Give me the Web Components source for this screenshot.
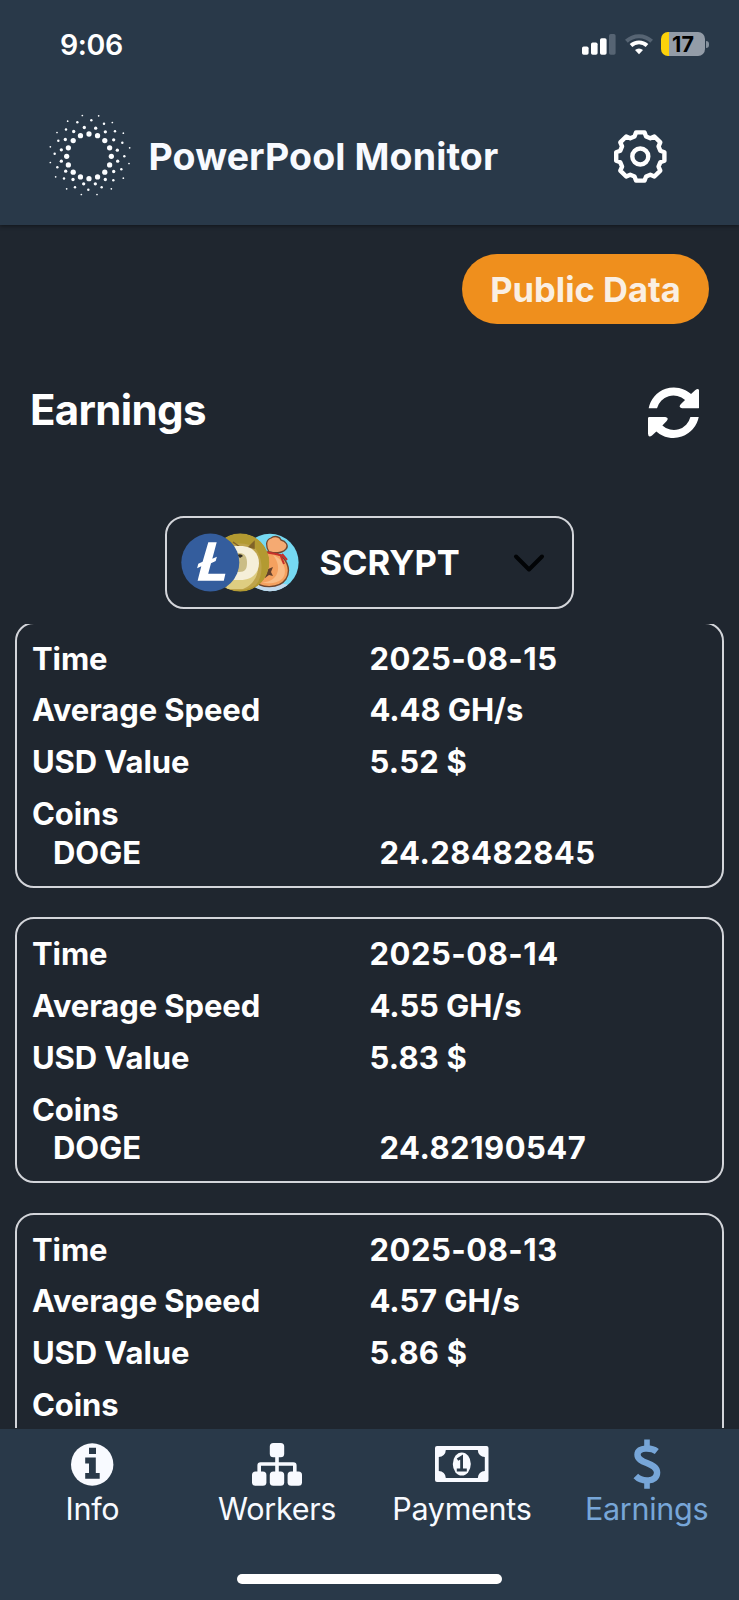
<!DOCTYPE html>
<html lang="en">
<head>
  <meta charset="utf-8">
  <meta name="viewport" content="width=device-width, initial-scale=1">
  <title>PowerPool Monitor</title>
  <style>
    :root {
      --bar-color: #293949;
      --page-color: #1f262f;
      --text-color: #ffffff;
      --border-color: #d3d5da;
      --accent-color: #77a6d8;
    }

    html,
    body {
      margin: 0;
      height: 100%;
      overflow: hidden;
      background: var(--page-color);
      color: var(--text-color);
      font-family: Inter, "Liberation Sans", sans-serif;
    }
  </style>
</head>
<body>
  <pool-app></pool-app>

  <script>
    const define = (name, html) => {
      customElements.define(name, class extends HTMLElement {
        constructor() {
          super();
          this.attachShadow({ mode: 'open' });
        }

        connectedCallback() {
          this.shadowRoot.innerHTML = typeof html === 'function' ? html(this) : html;
        }
      });
    };

    define('status-bar', `
      <style>
        :host {
          display: flex;
          align-items: center;
          height: 88px;
          padding: 0 30px 0 60px;
          box-sizing: border-box;
        }
        .time {
          flex: 1;
          font-size: 28.5px;
          font-weight: 600;
          letter-spacing: -0.4px;
        }
        .signal { margin-right: 9px; }
        .wifi { margin-right: 8px; }
        .battery {
          display: flex;
          align-items: center;
          justify-content: center;
          width: 44px;
          height: 24px;
          border-radius: 7px;
          background: linear-gradient(90deg, #fdd20a 8px, #939ca7 8px);
          color: #000;
          font-size: 21.5px;
          font-weight: 700;
          line-height: 24px;
        }
        .nub {
          width: 3px;
          height: 7px;
          margin-left: 1px;
          border-radius: 0 3px 3px 0;
          background: #84909c;
        }
      </style>
      <span class="time">9:06</span>
      <svg class="signal" width="34" height="21" viewBox="0 0 34 21" fill="#fff">
        <rect x="0" y="12.5" width="6.6" height="8.2" rx="1.7"/>
        <rect x="9" y="8.5" width="6.6" height="12.2" rx="1.7"/>
        <rect x="18" y="4.2" width="6.6" height="16.5" rx="1.7"/>
        <rect x="27" y="0" width="6.6" height="20.7" rx="1.7" fill="#566473"/>
      </svg>
      <svg class="wifi" width="28" height="21" viewBox="0 0 28 21" fill="none" stroke="#fff">
        <path d="M1.4 7.2a18.2 18.2 0 0 1 25.2 0" stroke="#566473" stroke-width="4"/>
        <path d="M6 11.5a11.6 11.6 0 0 1 16 0" stroke-width="3.8"/>
        <path d="M14 20.3l-4-4.2a6 6 0 0 1 8 0z" fill="#fff" stroke="none"/>
      </svg>
      <span class="battery">17</span>
      <span class="nub"></span>
    `);

    const ringDots = (count, radius) => Array.from({ length: count }, (_, i) => {
      const a = i * 2 * Math.PI / count;
      return [147 + radius * Math.sin(a), 152.5 - radius * Math.cos(a)];
    });

    // Four rings of dots, from the inner one outwards
    const LOGO_RINGS = [
      [7.9, ringDots(16, 67)],
      [5, [[133,66],[167,68],[196,79],[221,103],[232,134],[233,167],[221,198],[196,222],[166,235],[131,235],[99,222],[77,197],[64,167],[64,133],[76,102],[101,78]]],
      [3.7, [[154,44],[192,55],[225,77],[247,112],[253,152],[244,191],[220,224],[185,245],[145,253],[105,245],[72,219],[52,185],[44,145],[55,106],[78,72],[112,50]]],
      [2.6, [[127,30],[176,31],[217,51],[250,83],[269,127],[267,174],[250,218],[214,250],[171,267],[124,267],[80,250],[47,214],[31,171],[31,124],[51,81],[83,47]]]
    ];

    define('pool-logo', `
      <style>
        :host { display: block; width: 100px; height: 100px; }
        svg { display: block; }
      </style>
      <svg width="100" height="100" viewBox="0 4.5 300 300" fill="#fbfdff">
        ${LOGO_RINGS.map(([r, dots]) => dots.map(([x, y]) =>
          `<circle cx="${x}" cy="${y}" r="${r}"/>`).join('')).join('')}
      </svg>
    `);

    const gearPath = () => {
      const points = [[-5.8, -20], [-4.2, -24.1], [4.2, -24.1], [5.8, -20]];
      const out = [];
      for (let i = 0; i < 8; i++) {
        const a = i * Math.PI / 4;
        points.forEach(([x, y]) => {
          const px = x * Math.cos(a) - y * Math.sin(a);
          const py = x * Math.sin(a) + y * Math.cos(a);
          out.push(`${px.toFixed(2)} ${py.toFixed(2)}`);
        });
      }
      return `M${out.join('L')}Z`;
    };

    define('gear-icon', `
      <style>
        :host { display: block; width: 54px; height: 54px; }
        svg { display: block; }
      </style>
      <svg width="54" height="54" viewBox="-27.3 -26.5 54 54" fill="none" stroke="#fff" stroke-width="4.4" stroke-linejoin="round">
        <path d="${gearPath()}"/>
        <circle r="8"/>
      </svg>
    `);

    define('app-header', `
      <style>
        :host {
          display: block;
          flex: none;
          height: 225px;
          background: var(--bar-color);
          box-shadow: 0 1px 4px rgba(0, 0, 0, 0.45);
        }
        .row {
          display: flex;
          align-items: center;
          height: 137px;
          padding: 0 72px 0 40px;
        }
        h1 {
          flex: 1;
          margin: 0 0 0 8.5px;
          color: #f8faff;
          font-size: 37.5px;
          font-weight: 650;
          letter-spacing: 0.1px;
          white-space: nowrap;
        }
      </style>
      <status-bar></status-bar>
      <div class="row">
        <pool-logo></pool-logo>
        <h1><slot></slot></h1>
        <gear-icon></gear-icon>
      </div>
    `);

    define('data-badge', `
      <style>
        :host {
          display: flex;
          align-items: center;
          justify-content: center;
          width: 247px;
          height: 70px;
          border-radius: 35px;
          background: #ef8f1d;
          color: #faefe3;
          font-size: 34.5px;
          font-weight: 650;
          white-space: nowrap;
        }
      </style>
      <slot></slot>
    `);

    define('refresh-icon', `
      <style>
        :host { display: block; }
        svg { display: block; }
      </style>
      <svg width="51.4" height="51.4" viewBox="-77 -77 154 154" fill="#fff">
        <g id="half">
          <path d="M-75-13A77 77 0 0 1 52-56L65-68Q76-76 77-63V-17Q77-13 73-13H25Q13-15 21-25L34-38A51 51 0 0 0-50-13Z"/>
        </g>
        <use href="#half" transform="rotate(180)"/>
      </svg>
    `);

    define('coin-stack', `
      <style>
        :host { display: block; }
        svg { display: block; }
      </style>
      <svg width="118" height="59" viewBox="0 0 118 59">
        <defs>
          <clipPath id="sky"><circle cx="88.9" cy="29.5" r="28.7"/></clipPath>
          <clipPath id="gold"><circle cx="59.2" cy="29.5" r="29.2"/></clipPath>
        </defs>
        <g clip-path="url(#sky)">
          <rect x="59" width="59" height="59" fill="#76d9f2"/>
          <ellipse cx="90" cy="56" rx="24" ry="6" fill="#c3d9ec"/>
          <path d="M88 19C85 14 84 7 90 5c4-3 9-1 10 2 5 1 8 6 5 9-3 4-9 4-12 4z" fill="#f5aa72" stroke="#70472f" stroke-width="1.3"/>
          <path d="M86 19C75 24 67 36 73 47c6 9 25 9 32-1 6-10 0-23-11-26z" fill="#f5a15f" stroke="#70472f" stroke-width="1.4"/>
          <path d="M92 22c12 5 15 18 9 24-6 5-14 5-20 3 14 1 22-13 11-27z" fill="#f9bc86"/>
          <path d="M86 19.5q8 1 15 3M99 21l4 10M101 21l5 6" fill="none" stroke="#c6312a" stroke-width="2"/>
          <path d="M85 33l2 3 5-2-2 5 2 4-4-1-4 3z" fill="#63402c"/>
        </g>
        <g clip-path="url(#gold)">
          <circle cx="59.2" cy="29.5" r="29.2" fill="#b39a31"/>
          <path d="M38 20C47 9 65 8 74 15c8 10 9 27 1 37-12 8-30 6-35 0z" fill="#bfa44b"/>
          <path d="M52 9l7 5M68 14l5-5v6z" stroke="#806329" stroke-width="1.5" fill="#806329"/>
          <path d="M48 45c12 3 22-2 29-9-1 10-7 17-15 20H45z" fill="#decd81"/>
          <path d="M49 13h10c12 0 19 7 19 17s-7 17-19 17H49z" fill="#f5efd9"/>
          <path d="M52 20h6c6 0 8 4 8 10s-2 9-8 9h-6z" fill="#cabd86"/>
          <path d="M56 22q4-2 6 1l-3 2z" fill="#302c21"/>
        </g>
        <circle cx="29.3" cy="29.5" r="29" fill="#345d9d"/>
        <path d="M27.3 9.2h8.4l-4.4 16.6 4.6-2.1-1.2 4.4-4.7 2.1-2.8 10.5h17.2l-1.6 7H16.6l3.7-14.4-4.2 1.9 1.2-4.4 4.3-2z" fill="#fff"/>
      </svg>
    `);

    define('algo-select', `
      <style>
        :host {
          display: flex;
          align-items: center;
          box-sizing: border-box;
          width: 409px;
          height: 93px;
          padding: 0 27.5px 0 14px;
          border: 2px solid var(--border-color);
          border-radius: 19px;
        }
        .name {
          flex: 1;
          margin-left: 20.5px;
          font-size: 34.5px;
          font-weight: 650;
        }
      </style>
      <coin-stack></coin-stack>
      <span class="name"><slot></slot></span>
      <svg width="32" height="20" viewBox="0 0 32 20" fill="none" stroke="#020406" stroke-width="4" stroke-linecap="round" stroke-linejoin="round">
        <path d="M3 3.5l13 13L29 3.5"/>
      </svg>
    `);

    define('earning-card', el => `
      <style>
        :host {
          display: block;
          flex: none;
          box-sizing: border-box;
          height: 266px;
          padding: 16px 15px 0;
          border: 2px solid var(--border-color);
          border-radius: 19px;
          font-size: 31px;
          font-weight: 650;
          line-height: 38.5px;
          letter-spacing: -0.1px;
        }
        .row {
          display: grid;
          grid-template-columns: 337.5px 1fr;
          margin-bottom: 13.3px;
          white-space: nowrap;
        }
        .row.coins { margin-bottom: 0; }
        .row.coin {
          grid-template-columns: 326.5px 1fr;
          margin: 0 0 0 21px;
        }
        .digits { letter-spacing: 0.5px; }
        .usd { letter-spacing: 0.2px; }
      </style>
      <div class="row"><span>Time</span><span class="digits">${el.getAttribute('time')}</span></div>
      <div class="row"><span>Average Speed</span><span>${el.getAttribute('speed')}</span></div>
      <div class="row"><span>USD Value</span><span class="usd">${el.getAttribute('usd')}</span></div>
      <div class="row coins"><span>Coins</span></div>
      ${el.hasAttribute('doge') ? `
        <div class="row coin"><span>DOGE</span><span class="digits">${el.getAttribute('doge')}</span></div>
      ` : ''}
    `);

    const NAV_ICONS = {
      info: `
        <svg width="43" height="43" viewBox="0 0 43 43">
          <circle cx="21.2" cy="21.5" r="21.2" fill="#f8faff"/>
          <path d="M18 4.8h7v6.2h-7zM14.2 14.6h10.6v15.4h3.9v5.8H14.2v-5.8H18v-9.6h-3.8z" fill="#293949"/>
        </svg>`,
      workers: `
        <svg width="50" height="43" viewBox="0 0 50 43" fill="#f8faff">
          <rect x="17.8" width="14.4" height="14.3" rx="3.5"/>
          <rect y="28.5" width="14.4" height="14.3" rx="3.5"/>
          <rect x="17.8" y="28.5" width="14.4" height="14.3" rx="3.5"/>
          <rect x="35.6" y="28.5" width="14.4" height="14.3" rx="3.5"/>
          <path d="M25 13v17M7.2 30v-7.5q0-1.5 1.5-1.5h32.6q1.5 0 1.5 1.5V30" fill="none" stroke="#f8faff" stroke-width="3.6"/>
        </svg>`,
      payments: `
        <svg width="54" height="36" viewBox="0 0 54 36">
          <rect width="53.5" height="36" rx="2" fill="#f8faff"/>
          <path d="M10.8 4h32a7 7 0 0 0 7 7v14a7 7 0 0 0-7 7h-32a7 7 0 0 0-7-7V11a7 7 0 0 0 7-7z" fill="#293949"/>
          <ellipse cx="26.8" cy="18" rx="9" ry="11.6" fill="#f8faff"/>
          <path d="M22.5 13.6l4.1-2.5V24M21.8 24h10" fill="none" stroke="#293949" stroke-width="2.8"/>
        </svg>`,
      earnings: `
        <svg width="28" height="50" viewBox="0 0 28 50" fill="none" stroke="#77a6d8" stroke-width="6.4">
          <path d="M14 0.5v8M14 41v8.7" stroke-width="5.6"/>
          <path d="M23.8 12.6C19 8.8 4.5 7.3 4.5 15.8c0 9.4 19.6 7.2 19.6 17.8C24.1 43.8 8.5 43 2.8 37"/>
        </svg>`
    };

    define('nav-item', el => `
      <style>
        :host {
          display: flex;
          flex-direction: column;
          align-items: center;
          flex: 1;
          color: #f8faff;
          font-size: 30.5px;
          font-weight: 370;
          line-height: 38px;
          letter-spacing: -0.3px;
        }
        :host([active]) { color: var(--accent-color); }
        .icon {
          display: flex;
          align-items: center;
          height: 50px;
          margin: 10.5px 0 1px;
        }
      </style>
      <span class="icon">${NAV_ICONS[el.getAttribute('icon')]}</span>
      <span><slot></slot></span>
    `);

    define('tab-bar', `
      <style>
        :host {
          display: flex;
          flex-direction: column;
          flex: none;
          height: 171.4px;
          background: var(--bar-color);
        }
        .tabs {
          display: flex;
          flex: 1;
        }
        .home {
          align-self: center;
          width: 265px;
          height: 10.4px;
          margin-bottom: 16px;
          border-radius: 6px;
          background: #fff;
        }
      </style>
      <div class="tabs"><slot></slot></div>
      <div class="home"></div>
    `);

    define('pool-app', `
      <style>
        :host {
          display: flex;
          flex-direction: column;
          width: 739px;
          height: 1600px;
        }
        main {
          display: flex;
          flex-direction: column;
          flex: 1;
          min-height: 0;
        }
        data-badge {
          flex: none;
          align-self: flex-end;
          margin: 29px 30px 0 0;
        }
        .heading {
          display: flex;
          flex: none;
          align-items: center;
          justify-content: space-between;
          height: 178px;
          padding: 0 40px 0 30px;
        }
        h2 {
          margin: -8px 0 0;
          font-size: 42px;
          font-weight: 650;
          letter-spacing: -0.65px;
        }
        algo-select {
          flex: none;
          align-self: center;
          margin: 14px 0 15px;
        }
        .list {
          display: flex;
          flex: 1;
          flex-direction: column;
          gap: 29.5px;
          min-height: 0;
          margin-bottom: 1px;
          padding: 0 15px;
          overflow: hidden;
        }
        /* the list is scrolled slightly past the top edge of its first card */
        .list earning-card:first-child { margin-top: -2.4px; }
      </style>
      <app-header>PowerPool Monitor</app-header>
      <main>
        <data-badge>Public Data</data-badge>
        <div class="heading">
          <h2>Earnings</h2>
          <refresh-icon></refresh-icon>
        </div>
        <algo-select>SCRYPT</algo-select>
        <div class="list">
          <earning-card time="2025-08-15" speed="4.48 GH/s" usd="5.52 $" doge="24.28482845"></earning-card>
          <earning-card time="2025-08-14" speed="4.55 GH/s" usd="5.83 $" doge="24.82190547"></earning-card>
          <earning-card time="2025-08-13" speed="4.57 GH/s" usd="5.86 $"></earning-card>
        </div>
      </main>
      <tab-bar>
        <nav-item icon="info">Info</nav-item>
        <nav-item icon="workers">Workers</nav-item>
        <nav-item icon="payments">Payments</nav-item>
        <nav-item icon="earnings" active>Earnings</nav-item>
      </tab-bar>
    `);
  </script>
</body>
</html>
